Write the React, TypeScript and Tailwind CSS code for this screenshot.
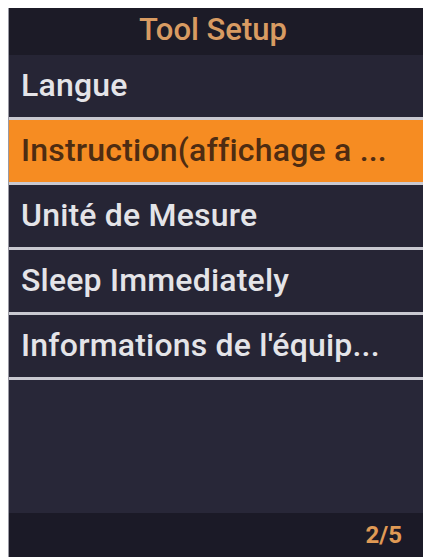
const items = [
  'Langue',
  'Instruction(affichage a ...',
  'Unité de Mesure',
  'Sleep Immediately',
  "Informations de l'équip...",
];

export default function App() {
  const selected = 1;

  return (
    <div className="w-[426px] h-[559px] bg-white pl-[8px] pt-[8px] font-['Roboto',sans-serif]">
      <div className="w-[415px] h-[549px] flex flex-col bg-[#262535] border-l border-[#9a9aa4]">
        <div className="h-[47px] shrink-0 flex items-center justify-center bg-[#1c1b27] text-[31px] font-medium text-[#d89b62] pb-[2px] pr-[6px]">
          Tool Setup
        </div>
        {items.map((label, i) => (
          <div key={label}>
            <div
              className={
                i === selected
                  ? 'h-[62px] flex items-center pl-[12px] pb-[3px] bg-[#f68c22] text-[#4e2c12] text-[32px] font-medium tracking-[0.2px] whitespace-nowrap overflow-hidden'
                  : 'h-[62px] flex items-center pl-[12px] pb-[3px] bg-[#262535] text-[#e4e4e8] text-[32px] font-medium tracking-[0.2px] whitespace-nowrap overflow-hidden'
              }
            >
              {label}
            </div>
            <div className="h-[3px] bg-[#c9c9d1]" />
          </div>
        ))}
        <div className="flex-1 bg-[#282738]" />
        <div className="h-[44px] shrink-0 flex items-center justify-end pr-[21px] bg-[#1b1a27] text-[24px] font-bold text-[#e09a55]">
          2/5
        </div>
      </div>
    </div>
  );
}
